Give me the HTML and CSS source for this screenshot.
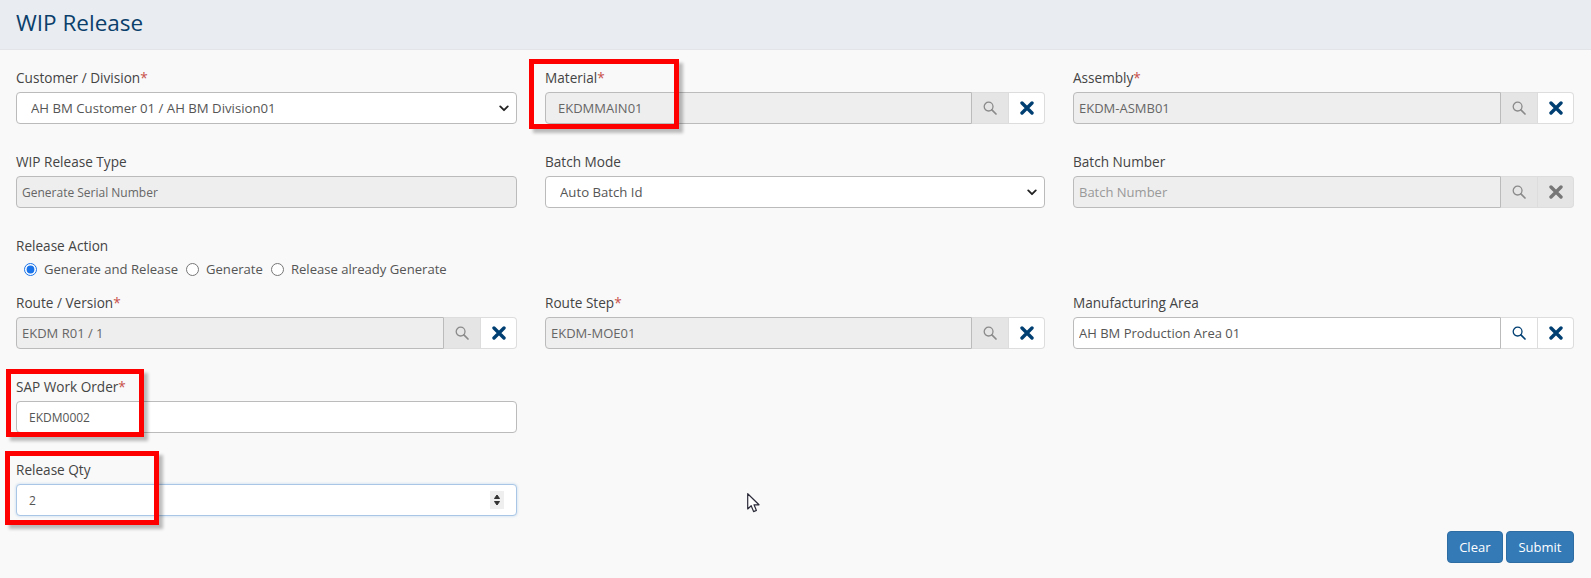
FILE: index.html
```html
<!DOCTYPE html>
<html lang="en">
<head>
    <meta charset="UTF-8">
    <meta name="viewport" content="width=device-width, initial-scale=1.0">
    <title>WIP Release</title>
    <link rel="stylesheet" href="styles.css">
</head>
<body>
    <svg class="icon-defs" width="0" height="0">
        <symbol id="i-search" viewBox="0 0 14 14">
            <circle cx="5.6" cy="5.6" r="4.4" fill="none" stroke="currentColor" stroke-width="1.3"/>
            <path d="M8.9 8.9 L13 13" fill="none" stroke="currentColor" stroke-width="1.7" stroke-linecap="round"/>
        </symbol>
        <symbol id="i-times" viewBox="0 0 14 14">
            <path d="M2 2 L12 12 M12 2 L2 12" fill="none" stroke="currentColor" stroke-width="3.4" stroke-linecap="round"/>
        </symbol>
        <symbol id="i-chevron" viewBox="0 0 12 8">
            <path d="M1.5 1.5 L6 6 L10.5 1.5" fill="none" stroke="currentColor" stroke-width="2.2" stroke-linecap="round" stroke-linejoin="round"/>
        </symbol>
    </svg>

    <header class="page-header">
        <h1>WIP Release</h1>
    </header>

    <form class="wip-form">
        <div class="form-row">
            <div class="field">
                <label>Customer / Division<span class="req">*</span></label>
                <div class="select-wrap">
                    <select class="control select-control">
                        <option>AH BM Customer 01 / AH BM Division01</option>
                    </select>
                    <svg class="chevron"><use href="#i-chevron"/></svg>
                </div>
            </div>
            <div class="field">
                <label>Material<span class="req">*</span></label>
                <div class="lookup">
                    <input class="control is-readonly pad-wide" value="EKDMMAIN01" readonly>
                    <button type="button" class="addon addon-off"><svg class="ico-search"><use href="#i-search"/></svg></button>
                    <button type="button" class="addon"><svg class="ico-times"><use href="#i-times"/></svg></button>
                </div>
            </div>
            <div class="field">
                <label>Assembly<span class="req">*</span></label>
                <div class="lookup">
                    <input class="control is-readonly pad-tight" value="EKDM-ASMB01" readonly>
                    <button type="button" class="addon addon-off"><svg class="ico-search"><use href="#i-search"/></svg></button>
                    <button type="button" class="addon"><svg class="ico-times"><use href="#i-times"/></svg></button>
                </div>
            </div>
        </div>

        <div class="form-row">
            <div class="field">
                <label>WIP Release Type</label>
                <input class="control is-readonly pad-tight small-text" value="Generate Serial Number" readonly>
            </div>
            <div class="field">
                <label>Batch Mode</label>
                <div class="select-wrap">
                    <select class="control select-control">
                        <option>Auto Batch Id</option>
                    </select>
                    <svg class="chevron"><use href="#i-chevron"/></svg>
                </div>
            </div>
            <div class="field">
                <label>Batch Number</label>
                <div class="lookup">
                    <input class="control is-readonly pad-tight" placeholder="Batch Number" readonly>
                    <button type="button" class="addon addon-off"><svg class="ico-search"><use href="#i-search"/></svg></button>
                    <button type="button" class="addon addon-off"><svg class="ico-times"><use href="#i-times"/></svg></button>
                </div>
            </div>
        </div>

        <div class="release-action">
            <label>Release Action</label>
            <div class="radio-group">
                <label class="radio"><input type="radio" name="action" checked>Generate and Release</label>
                <label class="radio"><input type="radio" name="action">Generate</label>
                <label class="radio"><input type="radio" name="action">Release already Generate</label>
            </div>
        </div>

        <div class="form-row">
            <div class="field">
                <label>Route / Version<span class="req">*</span></label>
                <div class="lookup">
                    <input class="control is-readonly pad-tight" value="EKDM R01 / 1" readonly>
                    <button type="button" class="addon addon-off"><svg class="ico-search"><use href="#i-search"/></svg></button>
                    <button type="button" class="addon"><svg class="ico-times"><use href="#i-times"/></svg></button>
                </div>
            </div>
            <div class="field">
                <label>Route Step<span class="req">*</span></label>
                <div class="lookup">
                    <input class="control is-readonly pad-tight" value="EKDM-MOE01" readonly>
                    <button type="button" class="addon addon-off"><svg class="ico-search"><use href="#i-search"/></svg></button>
                    <button type="button" class="addon"><svg class="ico-times"><use href="#i-times"/></svg></button>
                </div>
            </div>
            <div class="field">
                <label>Manufacturing Area</label>
                <div class="lookup">
                    <input class="control pad-tight" value="AH BM Production Area 01">
                    <button type="button" class="addon"><svg class="ico-search"><use href="#i-search"/></svg></button>
                    <button type="button" class="addon"><svg class="ico-times"><use href="#i-times"/></svg></button>
                </div>
            </div>
        </div>

        <div class="form-row sap-row">
            <div class="field">
                <label>SAP Work Order<span class="req">*</span></label>
                <input class="control pad-wide small-text" value="EKDM0002">
            </div>
        </div>

        <div class="form-row last-row">
            <div class="field">
                <label>Release Qty</label>
                <div class="qty-wrap">
                    <input class="control pad-wide small-text is-focused" value="2">
                    <span class="spinner">
                        <svg viewBox="0 0 14 18"><path d="M7 4 L9.5 7.5 H4.5 Z M7 14 L9.5 10.5 H4.5 Z" fill="#333" stroke="#333" stroke-linejoin="round"/></svg>
                    </span>
                </div>
            </div>
        </div>

        <div class="form-actions">
            <button type="button" class="btn">Clear</button>
            <button type="button" class="btn">Submit</button>
        </div>
    </form>

    <!-- red annotation boxes drawn over the form -->
    <div class="callout callout-material"></div>
    <div class="callout callout-sap"></div>
    <div class="callout callout-qty"></div>

    <svg class="mouse-cursor" viewBox="0 0 13 20">
        <path d="M0.7 0.7 V16 L4.2 12.7 L6.6 18.6 L9.4 17.4 L7 11.8 H12 Z" fill="#fff" stroke="#2b2b3a" stroke-width="1.2" stroke-linejoin="round"/>
    </svg>
</body>
</html>
```

FILE: styles.css
```css
* {
    box-sizing: border-box;
}
body {
    margin: 0;
    height: 578px;
    overflow: hidden;
    position: relative;
    background-color: #f9f9f9;
    font-family: "Open Sans", Arial, sans-serif;
    font-size: 13px;
    color: #444;
}
.icon-defs {
    position: absolute;
}
.page-header {
    height: 50px;
    padding-left: 16px;
    background-color: #e9ecf1;
    border-bottom: 1px solid #e2e4e8;
}
.page-header h1 {
    margin: 0;
    font-size: 22.5px;
    font-weight: 400;
    line-height: 46px;
    color: #0b3f6b;
}
.wip-form {
    padding: 19px 17px 0 16px;
}
.form-row {
    display: grid;
    grid-template-columns: 501px 500px 501px;
    column-gap: 28px;
    margin-bottom: 29px;
}
.sap-row {
    margin-bottom: 28px;
}
.last-row {
    margin-bottom: 15px;
}
.field > label,
.release-action > label {
    display: block;
    height: 18px;
    margin-bottom: 5px;
    font-size: 13.6px;
    line-height: 18px;
    font-weight: 500;
}
.req {
    color: #c8504a;
}
.control {
    display: block;
    width: 100%;
    height: 32px;
    padding: 0 12px;
    background-color: #fff;
    border: 1px solid #bbb;
    border-radius: 4px;
    font-family: inherit;
    font-size: 13px;
    color: #555;
    outline: none;
}
.is-readonly {
    background-color: #eee;
    color: #666;
}
.pad-wide {
    padding-left: 12px;
}
.pad-tight {
    padding-left: 5px;
}
.small-text {
    font-size: 12px;
}
.control::placeholder {
    color: #999;
}
.is-focused {
    border-color: #a9c6e6;
    box-shadow: 0 0 3px rgba(120, 170, 225, 0.45);
}
.select-wrap,
.qty-wrap {
    position: relative;
}
.select-control {
    appearance: none;
    padding-left: 14px;
    font-size: 13.2px;
}
.chevron {
    position: absolute;
    top: 13px;
    right: 8px;
    width: 10px;
    height: 7px;
    color: #222;
}
.spinner {
    position: absolute;
    top: 7px;
    right: 13px;
    width: 14px;
    height: 18px;
    background-color: #efefef;
}
.spinner svg {
    display: block;
    width: 14px;
    height: 18px;
}
.lookup {
    display: flex;
    height: 32px;
}
.lookup .control {
    flex: 1;
    min-width: 0;
    border-radius: 4px 0 0 4px;
}
.addon {
    display: flex;
    align-items: center;
    justify-content: center;
    width: 37px;
    padding: 0;
    margin: 0;
    background-color: #fff;
    border: 1px solid #ddd;
    border-left: 0;
    color: #003f72;
}
.addon:last-child {
    width: 36px;
    border-radius: 0 4px 4px 0;
}
.addon-off {
    background-color: #e5e5e5;
    color: #777;
}
.addon-off .ico-search {
    color: #8a8a8a;
}
.ico-search {
    width: 14px;
    height: 14px;
}
.ico-times {
    width: 14px;
    height: 14px;
}
.release-action {
    height: 57px;
}
.release-action > label {
    margin-bottom: 6px;
}
.radio-group {
    display: flex;
    padding-left: 8px;
    line-height: 17px;
    font-size: 13.1px;
    color: #555;
}
.radio {
    display: flex;
    align-items: center;
    margin-right: 8px;
}
.radio input {
    width: 13px;
    height: 13px;
    margin: 0 7px 0 0;
    accent-color: #1a73e8;
}
.form-actions {
    display: flex;
    justify-content: flex-end;
    gap: 3px;
}
.btn {
    height: 32px;
    padding: 0 11.5px;
    background-color: #337ab7;
    border: 1px solid #2e6da4;
    border-radius: 4px;
    font-family: inherit;
    font-size: 13px;
    font-weight: 500;
    color: #fff;
}
.callout {
    position: absolute;
    border: 5px solid #ff0000;
    box-shadow: 4px 4px 3px rgba(0, 0, 0, 0.25);
}
.callout-material {
    left: 529px;
    top: 59px;
    width: 150px;
    height: 70px;
}
.callout-sap {
    left: 6px;
    top: 369px;
    width: 138px;
    height: 68px;
}
.callout-qty {
    left: 5px;
    top: 451px;
    width: 154px;
    height: 74px;
}
.mouse-cursor {
    position: absolute;
    left: 747px;
    top: 493px;
    width: 13px;
    height: 20px;
}
```
